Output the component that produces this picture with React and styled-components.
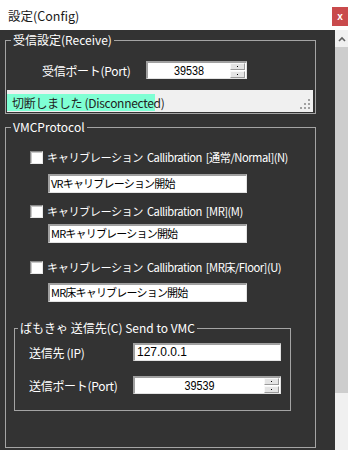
import styled, { createGlobalStyle } from "styled-components";

const GlobalStyle = createGlobalStyle`
  html, body {
    margin: 0;
    padding: 0;
    background: #333333;
  }
  body {
    font-family: "Noto Sans CJK JP", "Liberation Sans", sans-serif;
  }
  * {
    box-sizing: border-box;
  }
`;

const Window = styled.div`
  width: 348px;
  height: 450px;
  display: flex;
  flex-direction: column;
  overflow: hidden;
`;

const TitleBar = styled.div`
  height: 30px;
  background: #ffffff;
  display: flex;
  align-items: center;
  padding-left: 8px;
`;

const TitleText = styled.span`
  font-size: 12.5px;
  color: #1a1a1a;
`;

const CloseButton = styled.div`
  margin-left: auto;
  margin-top: 3px;
  width: 16px;
  height: 19px;
  background: #c94a4c;
  color: #ffffff;
  font-family: "Liberation Sans", sans-serif;
  font-weight: bold;
  font-size: 10px;
  display: flex;
  align-items: center;
  justify-content: center;
`;

const Body = styled.div`
  flex: 1;
  display: flex;
  background: #333333;
`;

const Content = styled.div`
  flex: 1;
  padding: 2px 0 0 5px;
`;

const Scrollbar = styled.div`
  width: 13px;
  background: #f0f0f0;
  display: flex;
  flex-direction: column;
`;

const ScrollArrow = styled.div`
  height: 17px;
  display: flex;
  align-items: center;
  justify-content: center;
`;

const ScrollThumb = styled.div`
  height: 346px;
  background: #cdcdcd;
`;

const GroupBox = styled.fieldset`
  margin: ${(p) => p.$margin || "0"};
  padding: ${(p) => p.$padding || "0"};
  width: ${(p) => p.$width}px;
  border: 1px solid #a4a4a4;
  min-width: 0;
`;

const Legend = styled.legend`
  color: #ffffff;
  font-size: 12px;
  line-height: 16px;
  padding: 0 2px;
  margin-left: ${(p) => p.$offset || 4}px;
`;

const FormRow = styled.div`
  display: flex;
  align-items: center;
  height: 18px;
  margin-top: ${(p) => p.$top}px;
  padding-left: ${(p) => p.$indent}px;
`;

const FieldLabel = styled.span`
  width: 104px;
  color: #ffffff;
  font-size: 12px;
  letter-spacing: -0.3px;
  white-space: nowrap;
`;

const SpinBox = styled.div`
  width: ${(p) => p.$width}px;
  height: 18px;
  background: #ffffff;
  border-style: solid;
  border-width: 2px 1px 1px 2px;
  border-color: #a0a0a0 #e3e3e3 #e3e3e3 #a0a0a0;
  display: flex;
  align-items: center;
`;

const SpinValue = styled.span`
  flex: 1;
  text-align: center;
  font-family: "Liberation Sans", sans-serif;
  font-size: 12px;
  color: #000000;
  transform: scaleX(0.9);
`;

const SpinButtons = styled.div`
  width: 15px;
  margin-right: 1px;
  display: flex;
  flex-direction: column;
  gap: 1px;
`;

const SpinButton = styled.div`
  height: 7px;
  background: #e4e4e4;
  border: 1px solid #9a9a9a;
  border-top-color: #f8f8f8;
  border-left-color: #f8f8f8;
  display: flex;
  align-items: center;
  justify-content: center;

  &::after {
    content: "";
    width: 1px;
    height: 1px;
    background: #000000;
  }
`;

const StatusBar = styled.div`
  margin-top: 11px;
  height: 22px;
  width: 306px;
  background: #f0f0f0;
  display: flex;
`;

const StatusLabel = styled.div`
  margin-top: 4px;
  height: 17px;
  width: 148px;
  background: #7fffd4;
  color: #222222;
  font-size: 12px;
  line-height: 17px;
  padding-left: 5px;
  letter-spacing: -0.3px;
  white-space: nowrap;
`;

const Grip = styled.svg`
  margin-left: auto;
  margin-right: 2px;
  align-self: flex-end;
  margin-bottom: 2px;
`;

const CheckRow = styled.label`
  display: flex;
  align-items: center;
  height: 20px;
  margin-top: ${(p) => p.$top}px;
  padding-left: 23px;
`;

const CheckBox = styled.span`
  width: 13px;
  height: 13px;
  background: #ffffff;
  border-style: solid;
  border-width: 1px;
  border-color: #8a8a8a #e8e8e8 #e8e8e8 #8a8a8a;
  box-shadow: inset 1px 1px 0 #c8c8c8;
`;

const CheckText = styled.span`
  margin-left: 4px;
  color: #ffffff;
  font-size: 11.2px;
  letter-spacing: -0.5px;
  word-spacing: 2px;
  white-space: nowrap;
`;

const TextField = styled.div`
  margin: ${(p) => p.$top}px 0 0 41px;
  width: 199px;
  height: 19px;
  background: #ffffff;
  border-style: solid;
  border-width: 2px 1px 1px 2px;
  border-color: #a0a0a0 #e3e3e3 #e3e3e3 #a0a0a0;
  padding-left: 1px;
  color: #000000;
  font-size: 11px;
  line-height: 15px;
  letter-spacing: -0.8px;
  white-space: nowrap;
`;

const IpField = styled.div`
  width: 148px;
  height: 18px;
  background: #ffffff;
  border-style: solid;
  border-width: 2px 1px 1px 2px;
  border-color: #a0a0a0 #e3e3e3 #e3e3e3 #a0a0a0;
  padding-left: 2px;
  font-family: "Liberation Sans", sans-serif;
  font-size: 12px;
  line-height: 14px;
  color: #000000;
`;

const calibrations = [
  { label: "キャリブレーション Callibration [通常/Normal](N)", value: "VRキャリブレーション開始", row: 12, field: 7 },
  { label: "キャリブレーション Callibration [MR](M)", value: "MRキャリブレーション開始", row: 8, field: 3 },
  { label: "キャリブレーション Callibration [MR床/Floor](U)", value: "MR床キャリブレーション開始", row: 14, field: 6 },
];

const Spinner = () => (
  <SpinButtons>
    <SpinButton />
    <SpinButton />
  </SpinButtons>
);

const App = () => {
  return (
    <Window>
      <GlobalStyle />
      <TitleBar>
        <TitleText>設定(Config)</TitleText>
        <CloseButton>x</CloseButton>
      </TitleBar>
      <Body>
        <Content>
          <GroupBox $width={311} $padding="0 1px 1px 1px">
            <Legend>受信設定(Receive)</Legend>
            <FormRow $top={13} $indent={35}>
              <FieldLabel>受信ポート(Port)</FieldLabel>
              <SpinBox $width={101}>
                <SpinValue>39538</SpinValue>
                <Spinner />
              </SpinBox>
            </FormRow>
            <StatusBar>
              <StatusLabel>切断しました (Disconnected)</StatusLabel>
              <Grip width="11" height="11" viewBox="0 0 11 11">
                <rect x="8" y="0" width="2" height="2" fill="#a0a0a0" />
                <rect x="4" y="4" width="2" height="2" fill="#a0a0a0" />
                <rect x="8" y="4" width="2" height="2" fill="#a0a0a0" />
                <rect x="0" y="8" width="2" height="2" fill="#a0a0a0" />
                <rect x="4" y="8" width="2" height="2" fill="#a0a0a0" />
                <rect x="8" y="8" width="2" height="2" fill="#a0a0a0" />
              </Grip>
            </StatusBar>
          </GroupBox>

          <GroupBox $width={311} $margin="5px 0 0 0" $padding="0 0 36px 1px">
            <Legend>VMCProtocol</Legend>
            {calibrations.map((c) => (
              <div key={c.value}>
                <CheckRow $top={c.row}>
                  <CheckBox />
                  <CheckText>{c.label}</CheckText>
                </CheckRow>
                <TextField $top={c.field}>{c.value}</TextField>
              </div>
            ))}

            <GroupBox $width={277} $margin="18px 0 0 7px" $padding="0 0 16px 0">
              <Legend $offset={3}>ばもきゃ 送信先(C) Send to VMC</Legend>
              <FormRow $top={7} $indent={14}>
                <FieldLabel>送信先 (IP)</FieldLabel>
                <IpField>127.0.0.1</IpField>
              </FormRow>
              <FormRow $top={15} $indent={14}>
                <FieldLabel>送信ポート(Port)</FieldLabel>
                <SpinBox $width={148}>
                  <SpinValue>39539</SpinValue>
                  <Spinner />
                </SpinBox>
              </FormRow>
            </GroupBox>
          </GroupBox>
        </Content>
        <Scrollbar>
          <ScrollArrow>
            <svg width="8" height="6" viewBox="0 0 8 6">
              <polyline points="1,5 4,2 7,5" fill="none" stroke="#606060" strokeWidth="1.6" />
            </svg>
          </ScrollArrow>
          <ScrollThumb />
        </Scrollbar>
      </Body>
    </Window>
  );
};

export default App;
